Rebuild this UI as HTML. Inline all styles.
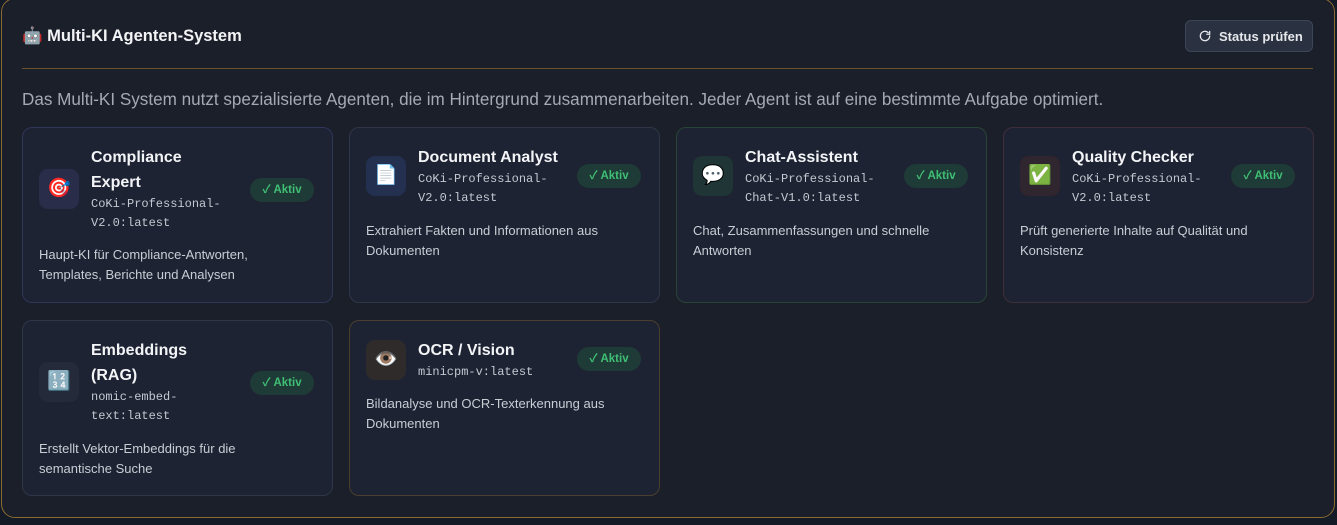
<!DOCTYPE html>
<html><head><meta charset="utf-8"><style>
*{box-sizing:border-box;margin:0;padding:0}
body{width:1337px;height:525px;background:#141a26;font-family:"Liberation Sans","Noto Sans CJK SC",sans-serif;overflow:hidden;position:relative}
.wrap{position:absolute;left:1px;top:-2px;width:1334px;height:520px;border:1.5px solid #8a6a30;border-radius:14px;background:#1b1f29}
.title{position:absolute;left:22px;top:27px;color:#f3f4f6;font-weight:bold;font-size:16.5px}
.btn{position:absolute;left:1185px;top:20px;width:128px;height:32px;border:1px solid #3d4658;border-radius:6px;background:#2a3140;color:#e5e7eb;font-size:13px;font-weight:bold;padding:8px 0 0 33px}
.btn svg{position:absolute;left:12px;top:8px}
.hr{position:absolute;left:22px;top:68px;width:1291px;height:1px;background:#6b5228}
.intro{position:absolute;left:22px;top:90px;color:#a4a9b3;font-size:17.1px}
.card{position:absolute;width:311px;height:176px;border:1px solid #2f3648;border-radius:10px;background:#1e2334}
.ic{position:absolute;left:16px;width:40px;height:40px;border-radius:9px;font-size:19px;text-align:center;line-height:40px}
.nm{position:absolute;left:68px;color:#f3f4f6;font-weight:bold;font-size:16px;line-height:25px;width:140px}
.md{font-family:"Liberation Mono",monospace;font-weight:normal;font-size:12px;color:#c4c8d0;line-height:19px;display:block;white-space:nowrap}
.bd{position:absolute;right:18px;width:64px;height:24px;border-radius:12px;background:#1f3b37;color:#3fbf74;font-size:11.5px;font-weight:bold;text-align:center;line-height:24px}
.ds{position:absolute;left:16px;right:16px;color:#c9cdd4;font-size:13px;line-height:20px}
</style></head><body>
<div class="wrap"></div>
<div class="title">🤖 Multi-KI Agenten-System</div>
<div class="btn"><svg width="14" height="14" viewBox="0 0 24 24" fill="none" stroke="#e5e7eb" stroke-width="2.2" stroke-linecap="round"><path d="M20 12a8 8 0 1 1-2.5-5.8"/><path d="M20 4v5h-5"/></svg>Status prüfen</div>
<div class="hr"></div>
<div class="intro">Das Multi-KI System nutzt spezialisierte Agenten, die im Hintergrund zusammenarbeiten. Jeder Agent ist auf eine bestimmte Aufgabe optimiert.</div>

<div class="card" style="left:22px;top:127px;border-color:#30355a">
<div class="ic" style="top:41px;background:#2a2d4a">🎯</div>
<div class="nm" style="top:17px">Compliance<br>Expert<span class="md">CoKi-Professional-<br>V2.0:latest</span></div>
<div class="bd" style="top:50px">✓ Aktiv</div>
<div class="ds" style="top:117px;right:40px">Haupt-KI für Compliance-Antworten, Templates, Berichte und Analysen</div></div>

<div class="card" style="left:349px;top:127px">
<div class="ic" style="top:28px;background:#243050">📄</div>
<div class="nm" style="top:17px;width:160px">Document Analyst<span class="md">CoKi-Professional-<br>V2.0:latest</span></div>
<div class="bd" style="top:36px">✓ Aktiv</div>
<div class="ds" style="top:93px">Extrahiert Fakten und Informationen aus Dokumenten</div></div>

<div class="card" style="left:676px;top:127px;border-color:#284436">
<div class="ic" style="top:28px;background:#1f3536">💬</div>
<div class="nm" style="top:17px;width:160px">Chat-Assistent<span class="md">CoKi-Professional-<br>Chat-V1.0:latest</span></div>
<div class="bd" style="top:36px">✓ Aktiv</div>
<div class="ds" style="top:93px">Chat, Zusammenfassungen und schnelle Antworten</div></div>

<div class="card" style="left:1003px;top:127px;border-color:#3e2e3a">
<div class="ic" style="top:28px;background:#30262f">✅</div>
<div class="nm" style="top:17px;width:160px">Quality Checker<span class="md">CoKi-Professional-<br>V2.0:latest</span></div>
<div class="bd" style="top:36px">✓ Aktiv</div>
<div class="ds" style="top:93px">Prüft generierte Inhalte auf Qualität und Konsistenz</div></div>

<div class="card" style="left:22px;top:320px">
<div class="ic" style="top:41px;background:#252a3a">🔢</div>
<div class="nm" style="top:17px">Embeddings<br>(RAG)<span class="md">nomic-embed-<br>text:latest</span></div>
<div class="bd" style="top:50px">✓ Aktiv</div>
<div class="ds" style="top:118px;right:40px">Erstellt Vektor-Embeddings für die semantische Suche</div></div>

<div class="card" style="left:349px;top:320px;border-color:#4a3e2e">
<div class="ic" style="top:19px;background:#2e2b2a">👁️</div>
<div class="nm" style="top:17px;width:160px">OCR / Vision<span class="md">minicpm-v:latest</span></div>
<div class="bd" style="top:26px">✓ Aktiv</div>
<div class="ds" style="top:73px">Bildanalyse und OCR-Texterkennung aus Dokumenten</div></div>
</body></html>
